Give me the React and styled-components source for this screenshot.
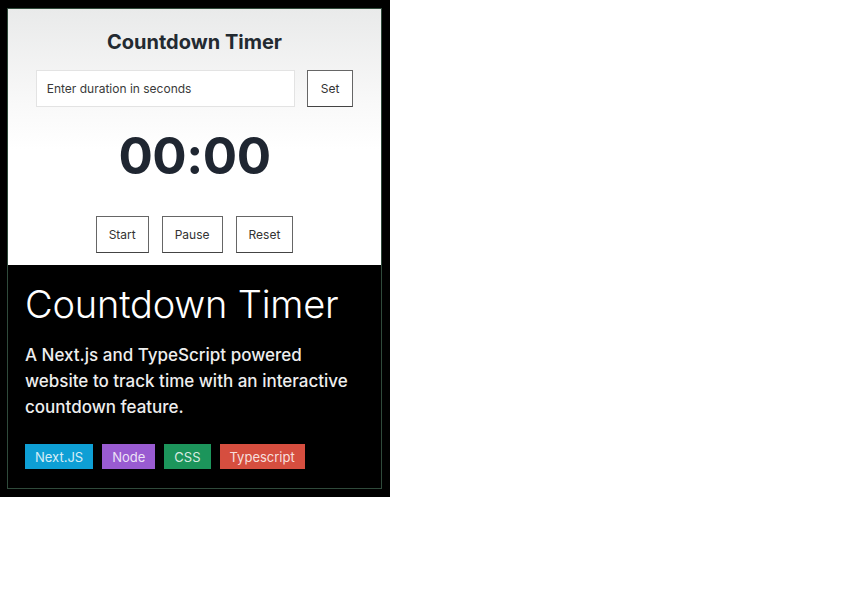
import styled, { createGlobalStyle } from "styled-components";

const GlobalStyle = createGlobalStyle`
  body {
    margin: 0;
    background: #fff;
    font-family: Inter, "Noto Sans", sans-serif;
  }
`;

const Card = styled.div`
  width: 390px;
  height: 497px;
  background: #000;
  box-sizing: border-box;
  padding: 8px 8px 8px 7px;
`;

const Frame = styled.div`
  height: 100%;
  box-sizing: border-box;
  border: 1px solid #2f4a3b;
  display: flex;
  flex-direction: column;
`;

const Preview = styled.div`
  height: 256px;
  background: linear-gradient(180deg, #e9eaea 0%, #f8f8f8 35%, #fff 55%);
  display: flex;
  flex-direction: column;
  align-items: center;
`;

const AppTitle = styled.h1`
  margin: 19px 0 0;
  font-size: 20px;
  font-weight: 700;
  color: #232a31;
  line-height: 28px;
`;

const InputRow = styled.div`
  display: flex;
  gap: 12px;
  margin-top: 14px;
`;

const DurationInput = styled.input`
  width: 259px;
  height: 37px;
  box-sizing: border-box;
  border: 1px solid #e3e3e3;
  padding: 0 10px;
  font-family: inherit;
  font-size: 12px;
  color: #333;
  background: #fff;
  &::placeholder { color: #3a3a3a; }
`;

const Btn = styled.button`
  height: 37px;
  box-sizing: border-box;
  padding: 0 ${(p) => p.$px || 12}px;
  background: #fff;
  border: 1px solid #666;
  border-bottom-color: #444;
  font-family: inherit;
  font-size: 12px;
  color: #333;
`;

const TimeDisplay = styled.div`
  margin-top: 19px;
  font-size: 51px;
  font-weight: 700;
  color: #1f2631;
  line-height: 60px;
  letter-spacing: -0.5px;
`;

const ButtonRow = styled.div`
  display: flex;
  gap: 13px;
  margin-top: 30px;
`;

const Info = styled.div`
  flex: 1;
  padding: 17px 18px 0 17px;
  color: #fff;
`;

const InfoTitle = styled.h2`
  margin: 0;
  font-size: 38px;
  font-weight: 300;
  line-height: 44px;
  letter-spacing: -0.2px;
`;

const Description = styled.p`
  margin: 16px 0 0;
  font-size: 17px;
  font-weight: 500;
  line-height: 26px;
  color: #eeeeee;
`;

const Tags = styled.div`
  display: flex;
  gap: 9px;
  margin-top: 24px;
`;

const Tag = styled.span`
  height: 25px;
  display: flex;
  align-items: center;
  padding: 0 10px;
  background: ${(p) => p.$bg};
  color: rgba(255, 255, 255, 0.84);
  font-size: 13px;
`;

const tags = [
  { label: "Next.JS", bg: "#0e9fd5" },
  { label: "Node", bg: "#995bd1" },
  { label: "CSS", bg: "#1c955b" },
  { label: "Typescript", bg: "#d64e3f" },
];

export default function App() {
  return (
    <>
      <GlobalStyle />
      <Card>
        <Frame>
          <Preview>
            <AppTitle>Countdown Timer</AppTitle>
            <InputRow>
              <DurationInput placeholder="Enter duration in seconds" />
              <Btn $px={13}>Set</Btn>
            </InputRow>
            <TimeDisplay>00:00</TimeDisplay>
            <ButtonRow>
              <Btn>Start</Btn>
              <Btn>Pause</Btn>
              <Btn>Reset</Btn>
            </ButtonRow>
          </Preview>
          <Info>
            <InfoTitle>Countdown Timer</InfoTitle>
            <Description>
              A Next.js and TypeScript powered website to track time with an
              interactive countdown feature.
            </Description>
            <Tags>
              {tags.map((t) => (
                <Tag key={t.label} $bg={t.bg}>
                  {t.label}
                </Tag>
              ))}
            </Tags>
          </Info>
        </Frame>
      </Card>
    </>
  );
}
